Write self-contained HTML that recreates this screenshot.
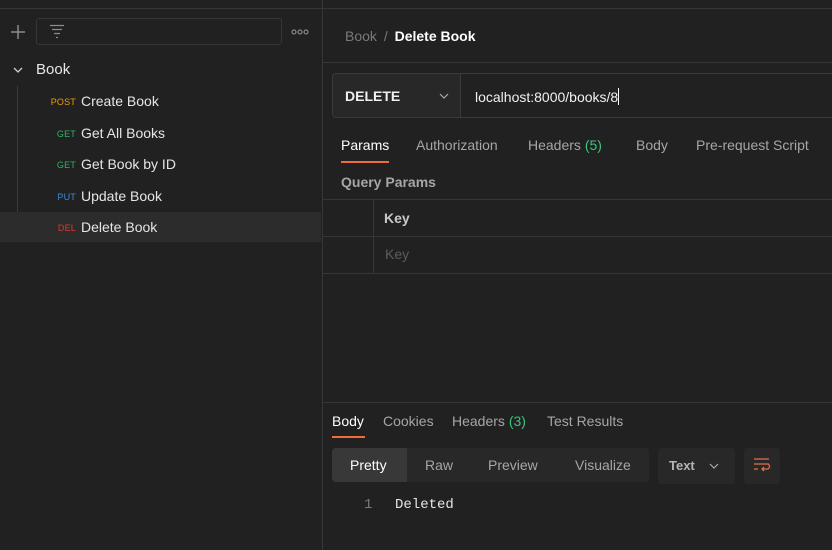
<!DOCTYPE html>
<html><head><meta charset="utf-8"><style>
*{margin:0;padding:0;box-sizing:border-box}
body{width:832px;height:550px;background:#212121;font-family:"Liberation Sans",sans-serif;color:#e6e6e6;position:relative;overflow:hidden;font-size:14px}
.a{position:absolute;white-space:nowrap}
.hl{position:absolute;height:1px;background:#363636}
.vl{position:absolute;width:1px;background:#363636}
.m{font-size:9px;text-align:right;width:28px;letter-spacing:0.2px}
</style></head><body>
<div class="hl" style="left:0;top:8px;width:832px"></div>
<div class="vl" style="left:322px;top:0;height:550px"></div>
<!-- sidebar -->
<svg class="a" style="left:10px;top:24px" width="16" height="16"><path d="M8 1v14M1 8h14" stroke="#8c8c8c" stroke-width="1.5"/></svg>
<div class="a" style="left:36px;top:18px;width:246px;height:27px;border:1px solid #363636;border-radius:3px"></div>
<svg class="a" style="left:49px;top:24px" width="16" height="16"><path d="M1 1.5h14M3 5.5h10M5 9.5h6M7 13.5h2" stroke="#8c8c8c" stroke-width="1.2"/></svg>
<svg class="a" style="left:291px;top:28px" width="18" height="8"><circle cx="3" cy="4" r="2" stroke="#9a9a9a" fill="none" stroke-width="1"/><circle cx="9" cy="4" r="2" stroke="#9a9a9a" fill="none" stroke-width="1"/><circle cx="15" cy="4" r="2" stroke="#9a9a9a" fill="none" stroke-width="1"/></svg>
<svg class="a" style="left:12px;top:65px" width="12" height="10"><path d="M2 3l4 4 4-4" stroke="#cfcfcf" stroke-width="1.3" fill="none"/></svg>
<div class="a" style="left:36px;top:61px;font-size:15px;color:#e6e6e6">Book</div>
<div class="vl" style="left:17px;top:86px;height:156px;background:#3a3a3a"></div>
<div class="a" style="left:0;top:212px;width:321px;height:30px;background:#2c2c2c"></div>
<div class="a m" style="left:48px;top:97px;color:#e5a00d">POST</div><div class="a" style="left:81px;top:93px">Create Book</div>
<div class="a m" style="left:48px;top:129px;color:#2cb368">GET</div><div class="a" style="left:81px;top:125px">Get All Books</div>
<div class="a m" style="left:48px;top:160px;color:#2cb368">GET</div><div class="a" style="left:81px;top:156px">Get Book by ID</div>
<div class="a m" style="left:48px;top:192px;color:#3b8ad9">PUT</div><div class="a" style="left:81px;top:188px">Update Book</div>
<div class="a m" style="left:48px;top:223px;color:#e0362c">DEL</div><div class="a" style="left:81px;top:219px">Delete Book</div>
<!-- header -->
<div class="a" style="left:345px;top:28px;color:#7a7a7a">Book <span style="margin:0 3px">/</span> <b style="color:#fff">Delete Book</b></div>
<div class="hl" style="left:323px;top:62px;width:509px"></div>
<!-- url bar -->
<div class="a" style="left:332px;top:73px;width:510px;height:45px;border:1px solid #3a3a3a;border-radius:4px;background:#212121"></div>
<div class="a" style="left:333px;top:74px;width:128px;height:43px;background:#282828;border-right:1px solid #3a3a3a;border-radius:4px 0 0 4px"></div>
<div class="a" style="left:345px;top:88px;font-weight:bold;color:#f0f0f0">DELETE</div>
<svg class="a" style="left:438px;top:91px" width="12" height="10"><path d="M2 3l4 4 4-4" stroke="#aaa" stroke-width="1.2" fill="none"/></svg>
<div class="a" style="left:475px;top:88px;color:#f0f0f0">localhost:8000/books/8<span style="display:inline-block;width:1px;height:17px;background:#fff;vertical-align:-3px"></span></div>
<!-- tabs -->
<div class="a" style="left:341px;top:137px;color:#fff">Params</div>
<div class="a" style="left:341px;top:161px;width:48px;height:2px;background:#f26b3a"></div>
<div class="a" style="left:416px;top:137px;color:#a6a6a6">Authorization</div>
<div class="a" style="left:528px;top:137px;color:#a6a6a6">Headers <span style="color:#3cc47c">(5)</span></div>
<div class="a" style="left:636px;top:137px;color:#a6a6a6">Body</div>
<div class="a" style="left:696px;top:137px;color:#a6a6a6">Pre-request Script</div>
<div class="a" style="left:341px;top:174px;color:#a6a6a6;font-weight:bold">Query Params</div>
<div class="hl" style="left:323px;top:199px;width:509px"></div>
<div class="hl" style="left:323px;top:236px;width:509px"></div>
<div class="hl" style="left:323px;top:273px;width:509px"></div>
<div class="vl" style="left:373px;top:200px;height:73px"></div>
<div class="a" style="left:384px;top:210px;font-weight:bold;color:#c8c8c8">Key</div>
<div class="a" style="left:385px;top:246px;color:#5c5c5c">Key</div>
<!-- response -->
<div class="hl" style="left:323px;top:402px;width:509px"></div>
<div class="a" style="left:332px;top:413px;color:#fff">Body</div>
<div class="a" style="left:332px;top:436px;width:33px;height:2px;background:#f26b3a"></div>
<div class="a" style="left:383px;top:413px;color:#a6a6a6">Cookies</div>
<div class="a" style="left:452px;top:413px;color:#a6a6a6">Headers <span style="color:#3cc47c">(3)</span></div>
<div class="a" style="left:547px;top:413px;color:#a6a6a6">Test Results</div>
<div class="a" style="left:332px;top:448px;width:317px;height:34px;background:#282828;border-radius:4px"></div>
<div class="a" style="left:332px;top:448px;width:75px;height:34px;background:#383838;border-radius:4px 0 0 4px"></div>
<div class="a" style="left:350px;top:457px;color:#fff">Pretty</div>
<div class="a" style="left:425px;top:457px;color:#a6a6a6">Raw</div>
<div class="a" style="left:488px;top:457px;color:#a6a6a6">Preview</div>
<div class="a" style="left:575px;top:457px;color:#a6a6a6">Visualize</div>
<div class="a" style="left:658px;top:448px;width:77px;height:36px;background:#282828;border-radius:4px"></div>
<div class="a" style="left:669px;top:458px;font-size:13px;font-weight:bold;color:#b5b5b5">Text</div>
<svg class="a" style="left:708px;top:461px" width="12" height="10"><path d="M2 3l4 4 4-4" stroke="#aaa" stroke-width="1.2" fill="none"/></svg>
<div class="a" style="left:744px;top:448px;width:36px;height:36px;background:#282828;border-radius:4px"></div>
<svg class="a" style="left:753px;top:457px" width="18" height="18"><path d="M1 2h15M1 7h15M1 12h4M9 12h5a2.5 2.5 0 0 0 0-5" stroke="#e0704a" stroke-width="1.3" fill="none"/><path d="M11 10l-2 2 2 2" stroke="#e0704a" stroke-width="1.3" fill="none"/></svg>
<div class="a" style="left:364px;top:497px;font-family:'Liberation Mono',monospace;font-size:14px;color:#7a7a7a">1</div>
<div class="a" style="left:395px;top:497px;font-family:'Liberation Mono',monospace;font-size:14px;color:#e6e6e6">Deleted</div>
</body></html>
